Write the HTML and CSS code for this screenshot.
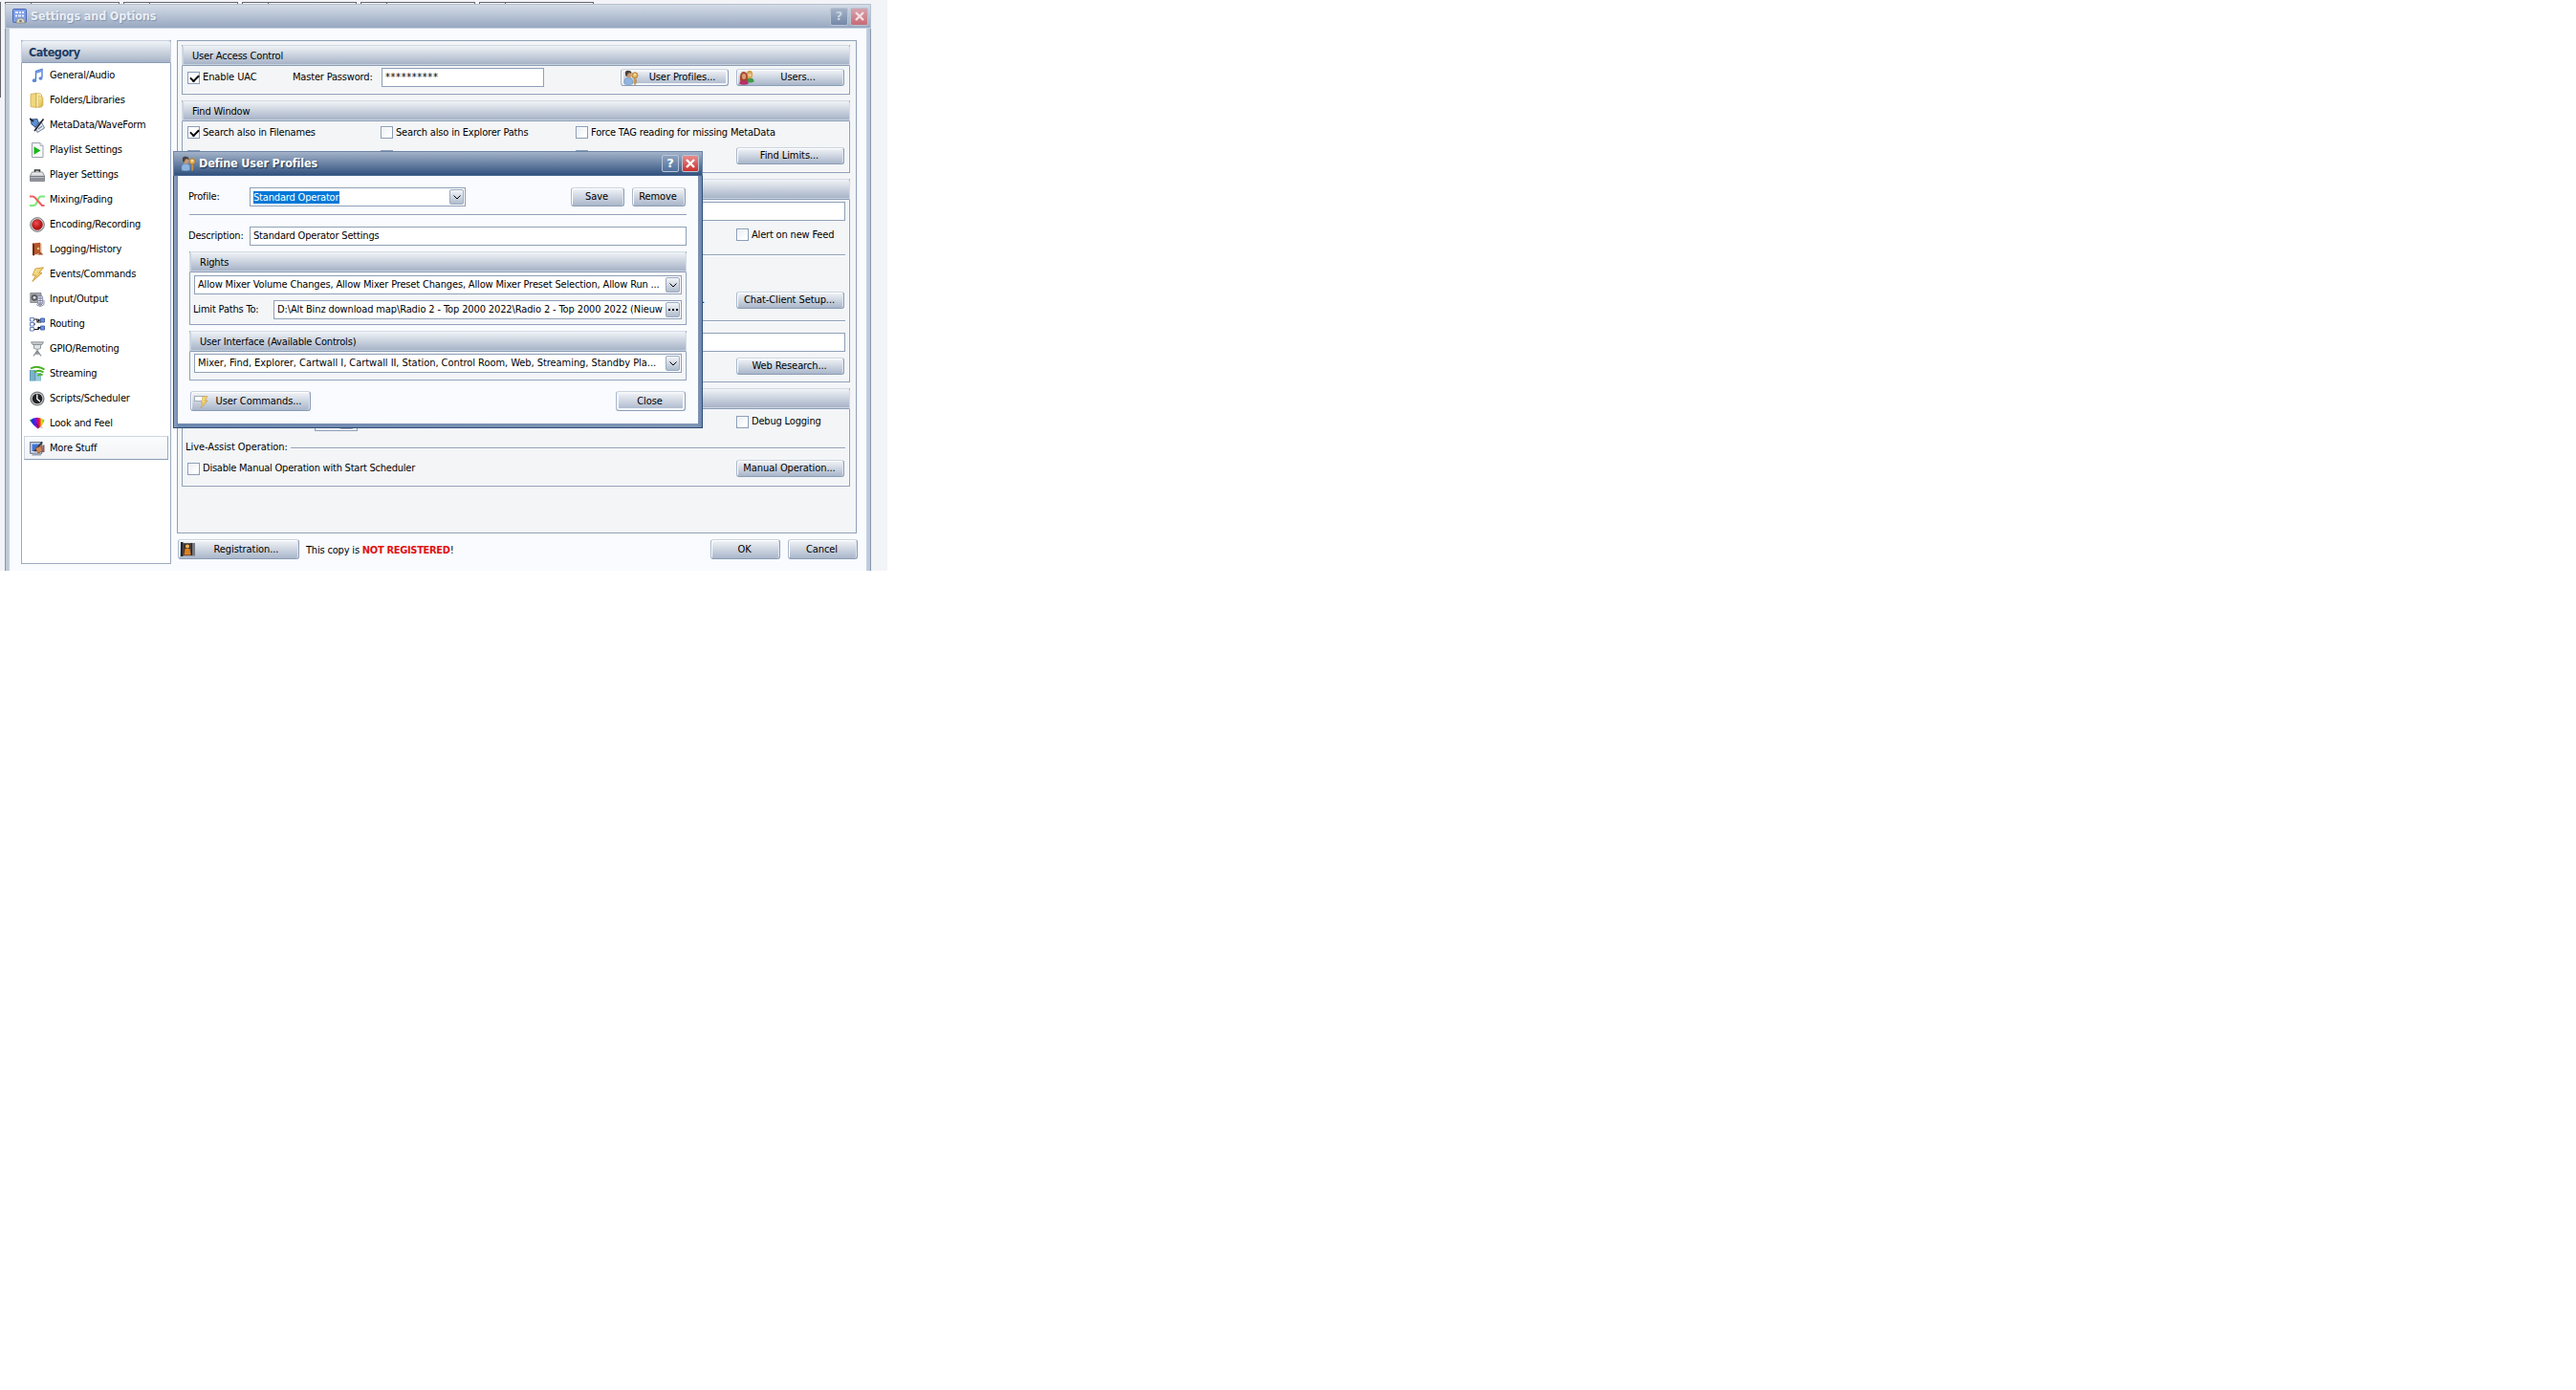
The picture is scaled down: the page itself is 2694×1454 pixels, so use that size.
FILE: index.html
```
<!DOCTYPE html>
<html lang="en">
<head>
<meta charset="utf-8">
<title>Settings and Options</title>
<link rel="stylesheet" href="styles.css">
</head>
<body>
<svg class="defs" aria-hidden="true">
  <defs>
    <linearGradient id="gold" x1="0" y1="0" x2="1" y2="1"><stop offset="0" stop-color="#fdf3b4"/><stop offset="1" stop-color="#d9a92c"/></linearGradient>
    <linearGradient id="steel" x1="0" y1="0" x2="0" y2="1"><stop offset="0" stop-color="#fafafa"/><stop offset="1" stop-color="#8c8f98"/></linearGradient>
    <linearGradient id="rainbow"><stop offset="0" stop-color="#16a016"/><stop offset=".2" stop-color="#1030e0"/><stop offset=".45" stop-color="#8a10e0"/><stop offset=".65" stop-color="#f01020"/><stop offset=".82" stop-color="#f8e010"/><stop offset="1" stop-color="#20c030"/></linearGradient>
    <radialGradient id="red" cx=".4" cy=".35"><stop offset="0" stop-color="#f05050"/><stop offset="1" stop-color="#b81414"/></radialGradient>
    <symbol id="userkey" viewBox="0 0 16 16">
      <path d="M1 15V12Q1 8.500 4.500 8.500H7Q9.500 9 9.500 12V15Q5 16.500 1 15Z" fill="#8fb5e0" stroke="#6d94c2" stroke-width=".6"/>
      <circle cx="5.500" cy="5.300" r="3" fill="#c79a72"/><path d="M2 5Q1 .5 5 .8Q8.500 .8 8.500 4Q5.500 2.600 4.500 4.200Q4.500 6.500 2.800 7Z" fill="#4c4038"/>
      <circle cx="12" cy="5.800" r="3" fill="#e6b45c" stroke="#a8762c" stroke-width=".8"/><circle cx="12" cy="5" r=".9" fill="#fff3cf"/>
      <path d="M11.300 8.500H12.900V15L12 16L11.300 15Z" fill="#d9a24a" stroke="#a8762c" stroke-width=".4"/><path d="M13 11h1M13 13h1" stroke="#a8762c"/>
    </symbol>
    <symbol id="users" viewBox="0 0 16 16">
      <path d="M7.500 13Q7.500 8.500 11 8.500Q15.600 8.500 15.600 12.500Q12 14 7.500 13Z" fill="#3e9a48"/><ellipse cx="11" cy="5" rx="3.200" ry="4.200" fill="#d3a14c"/><circle cx="11" cy="5.600" r="2" fill="#ecc58e"/>
      <path d="M.5 15Q.3 10.300 4.500 10.300Q9.800 10.300 9.600 15Q5 16.500 .5 15Z" fill="#b82f68"/><path d="M1 11.500Q0 2 5 2Q9.800 2.200 8.800 11.500Z" fill="#a3442c"/><ellipse cx="5" cy="7" rx="2.200" ry="2.900" fill="#dc9a70"/>
    </symbol>
    <symbol id="bolt" viewBox="0 0 16 16"><path d="M6 2 14.500 .8 10 6.300 13 6.500 2.800 15.500 6.500 9.300 3 9Z" fill="url(#gold)" stroke="#c98a24" stroke-width=".8"/></symbol>
  </defs>
</svg>

<div class="screen">
  <div class="tabs"><i></i><i></i><i></i><i></i><i></i></div>
  <span class="tabs-edge"></span>

  <section class="window settings">
    <header class="titlebar">
      <svg class="icon" viewBox="0 0 16 16"><rect x=".5" y=".5" width="14" height="14" rx="1" fill="#7ea0e6" stroke="#4a63b8"/><path d="M3 3h3v2H3zM7 3h2v2H7zM10 3h2v2h-2zM3 6.500h2v2H3zM6 6.500h3v2H6zM10 6.500h2v2h-2z" fill="#e8f0ff"/><path d="M4 15Q4 10 8.500 10Q13 10 13 15Z" fill="#d8d5c4" stroke="#8d8a7c" stroke-width=".8"/><circle cx="8.500" cy="13" r="1.300" fill="#777"/></svg>
      <h1>Settings and Options</h1>
      <span class="cap help">?</span>
      <span class="cap shut"><svg viewBox="0 0 10 10"><path d="M1 1 9 9M9 1 1 9"/></svg></span>
    </header>
    <div class="client">
      <nav class="category">
        <h2>Category</h2>
        <ul>
          <li><svg class="icon" viewBox="0 0 16 16"><path d="M6.500 12V3.500L13 1.500V10" fill="none" stroke="#4a73c8" stroke-width="1.300"/><path d="M6.500 3.500 13 1.500V4L6.500 6Z" fill="#6f9ae6"/><ellipse cx="5" cy="13.200" rx="2.200" ry="1.900" fill="#5b86d8"/><ellipse cx="11.500" cy="11" rx="2" ry="1.700" fill="#5b86d8"/></svg>General/Audio</li>
          <li><svg class="icon" viewBox="0 0 16 16"><path d="M1 1.500 7 .5V15.500L1 14.500Z" fill="#f1d77c" stroke="#c5a044" stroke-width=".7"/><path d="M7 .8H11L12.500 2V15H7Z" fill="#fdf0b2" stroke="#c5a044" stroke-width=".7"/><path d="M9.500 3 14 5V13.500L9.500 15.500Z" fill="url(#gold)" stroke="#c5a044" stroke-width=".5"/></svg>Folders/Libraries</li>
          <li><svg class="icon" viewBox="0 0 16 16"><path d="M5 8 12 4 15.500 11 8 15.500Z" fill="#dfe8f2" stroke="#56677c" stroke-width=".8"/><path d="M1 2 8 1.500 9.500 6 6 10 2 7Z" fill="#5b8fd0" stroke="#1f3f70" stroke-width=".8"/><path d="M0 1 4 4M5 14 14.500 1.500" stroke="#223" stroke-width="1.600"/><path d="M9 12l4-3" stroke="#56677c"/></svg>MetaData/WaveForm</li>
          <li><svg class="icon" viewBox="0 0 16 16"><path d="M2.500 .5H11L14 3.500V15.500H2.500Z" fill="#f8f9fb" stroke="#9ba1ab"/><path d="M11 .5V3.500H14" fill="#dde2e8" stroke="#9ba1ab" stroke-width=".7"/><path d="M4.500 4.300 11.500 8.500 4.500 12.700Z" fill="#17b817"/></svg>Playlist Settings</li>
          <li><svg class="icon" viewBox="0 0 16 16"><path d="M5.500 5V3H10.500V5" fill="none" stroke="#333" stroke-width="1.600"/><path d="M2.500 5H13.500L15.500 9V14.500H.5V9Z" fill="url(#steel)" stroke="#777b85" stroke-width=".8"/><path d="M.5 9.500H15.500M1 12H15" stroke="#62656e" stroke-width=".8"/></svg>Player Settings</li>
          <li><svg class="icon" viewBox="0 0 16 16"><path d="M0 14H4Q6.500 14 8 9.500Q9.500 4.500 12 4.500H16" fill="none" stroke="#7be87b" stroke-width="2.200"/><path d="M0 4.500H3Q5 4.500 8 8.500L13 14H15.500" fill="none" stroke="#ee6262" stroke-width="2.200"/></svg>Mixing/Fading</li>
          <li><svg class="icon" viewBox="0 0 16 16"><circle cx="8" cy="8" r="7.300" fill="#d7d7d9" stroke="#707074"/><circle cx="8" cy="8" r="5.500" fill="url(#red)" stroke="#8c2020" stroke-width=".5"/></svg>Encoding/Recording</li>
          <li><svg class="icon" viewBox="0 0 16 16"><path d="M3 1.500 11 .8V12L3 14Z" fill="#b8562c"/><path d="M3 1.500 5 2.500V14.500L3 14Z" fill="#6d2c14"/><path d="M11 .8 12.500 2V13L5 14.500 11 12Z" fill="#e2b08a"/><circle cx="9" cy="7" r="1.300" fill="#e8c07a"/><path d="M9 13.500 14.500 13.500 11 10.500Z" fill="#9b4a28"/></svg>Logging/History</li>
          <li><svg class="icon"><use href="#bolt"/></svg>Events/Commands</li>
          <li><svg class="icon" viewBox="0 0 16 16"><path d="M.8 1.500H12V11.500H.8Z" fill="#a6a8ac" stroke="#6c6e74" stroke-width=".7"/><circle cx="5" cy="6.300" r="3.400" fill="#5a5c62"/><circle cx="5" cy="6.300" r="1.500" fill="#d8dade"/><rect x="8.300" y="4" width="5.400" height="10" rx="2.700" fill="#e6e9f2" stroke="#6d7490" stroke-width=".8"/><path d="M8.500 7h5M8.500 9.500h5M8.500 12h5M11 4v11.500M7 13.500Q11 17 15 13.500V9" fill="none" stroke="#6d7490" stroke-width=".8"/></svg>Input/Output</li>
          <li><svg class="icon" viewBox="0 0 16 16"><path d="M4 3H8V6H12M4 8H6M4 13.500H9V11.500H12" fill="none" stroke="#111" stroke-width="1.200"/><path d="M.5 1.500H4.500V5H.5ZM.5 6.500H4.500V10H.5ZM.5 11.500H4.500V15H.5Z" fill="#f5f7fc" stroke="#5a75b0" stroke-width=".9"/><path d="M11.500 2H15.500V6H11.500ZM11.500 10H15.500V14H11.500Z" fill="#6d93e0" stroke="#3c5ca4" stroke-width=".9"/><path d="M9 2.500 11.500 4 9 5.500ZM9 10.500 11.500 12 9 13.500Z" fill="#111"/></svg>Routing</li>
          <li><svg class="icon" viewBox="0 0 16 16"><path d="M1.500 .8H14.500L13 3.500H3Z" fill="#c5c9cc" stroke="#7f8589" stroke-width=".8"/><path d="M4.500 3.500H11.500V7.500Q8 9.500 4.500 7.500Z" fill="#dfe2e4" stroke="#7f8589" stroke-width=".8"/><path d="M8 9V13M8 9.500 4 15.500M8 9.500 12 15.500M5.500 13H10.500" fill="none" stroke="#8b9195" stroke-width="1.300"/></svg>GPIO/Remoting</li>
          <li><svg class="icon" viewBox="0 0 16 16"><path d="M0 4H6V15.500H0Z" fill="#5d9ab8"/><path d="M6 7H12V15.500H6Z" fill="#86bfd2"/><path d="M2 4V15M4 4V15M8 8V15M10 8V15" stroke="#b9dbe6" stroke-width=".7"/><path d="M1 2.500Q8 -1.500 15.500 3.500M5 6.500Q9.500 3 14.500 6.500M8.500 10Q11 7.500 13.500 9.500" fill="none" stroke="#48b020" stroke-width="1.800"/></svg>Streaming</li>
          <li><svg class="icon" viewBox="0 0 16 16"><circle cx="8" cy="8" r="7.600" fill="#77797c"/><circle cx="8" cy="8" r="6.300" fill="#d0d2d4"/><circle cx="8" cy="8" r="5.300" fill="#202224"/><path d="M7.800 3.500V8.300L10.800 11" fill="none" stroke="#fff" stroke-width="1.300"/></svg>Scripts/Scheduler</li>
          <li><svg class="icon" viewBox="0 0 16 16"><path d="M0 4.500Q8 -1 15.500 4.500L12.500 11 8.500 13.500 4 9.500Z" fill="url(#rainbow)"/><path d="M9 13 13 10.500 14 13Z" fill="#cfd3d8"/><path d="M7 8 9.500 12.500" stroke="#222" stroke-width=".8"/></svg>Look and Feel</li>
          <li class="current"><svg class="icon" viewBox="0 0 16 16"><rect x=".7" y="1.700" width="12" height="11.500" fill="#dfe6f2" stroke="#52617e"/><rect x="2.500" y="3.500" width="8.500" height="7.500" fill="#3f74d4"/><path d="M2 15.500H12V13H4Z" fill="#9aa2b0"/><path d="M4 11 12.500 .8 13.800 2 6.500 11.500Z" fill="#3a3a40"/><path d="M6 8 11.500 5.500 13.500 10.500 9 13Z" fill="#d08a58" stroke="#7c4524" stroke-width=".7"/><path d="M13.500 4.500H15.500V12H13Z" fill="#8e5a60"/></svg>More Stuff</li>
        </ul>
      </nav>

      <main class="page">
        <div class="panel">
          <section class="group uac">
            <h3>User Access Control</h3>
            <div class="row">
              <label class="check on"><i></i>Enable UAC</label>
              <span class="pw-label">Master Password:</span>
              <span class="field pw">**********</span>
              <span class="btn w113 focus push"><svg class="icon"><use href="#userkey"/></svg><b>User Profiles...</b></span>
              <span class="btn w113"><svg class="icon"><use href="#users"/></svg><b>Users...</b></span>
            </div>
          </section>
          <section class="group find">
            <h3>Find Window</h3>
            <div class="thirds">
              <label class="check on"><i></i>Search also in Filenames</label>
              <label class="check"><i></i>Search also in Explorer Paths</label>
              <label class="check tag"><i></i>Force TAG reading for missing MetaData</label>
            </div>
            <div class="thirds second">
              <label class="check"><i></i></label>
              <label class="check"><i></i></label>
              <label class="check"><i></i></label>
              <span class="btn w113"><b>Find Limits...</b></span>
            </div>
          </section>
          <section class="group web">
            <h3></h3>
            <span class="field full"></span>
            <div class="row right feed"><label class="check w113"><i></i>Alert on new Feed</label></div>
            <hr>
            <div class="row right chat"><span>.</span><span class="btn w113"><b>Chat-Client Setup...</b></span></div>
            <hr>
            <span class="field full research"></span>
            <div class="row right"><span class="btn w113"><b>Web Research...</b></span></div>
          </section>
          <section class="group ops">
            <h3></h3>
            <div class="row debug"><span class="field spin"><i class="drop"></i></span><label class="check w113"><i></i>Debug Logging</label></div>
            <div class="legend"><span>Live-Assist Operation:</span><hr></div>
            <div class="row manual"><label class="check"><i></i>Disable Manual Operation with Start Scheduler</label><span class="btn w113"><b>Manual Operation...</b></span></div>
          </section>
        </div>
        <footer class="actions">
          <span class="btn reg"><svg class="icon" viewBox="0 0 16 16"><rect y="1" width="15" height="13.500" fill="#77797f"/><path d="M0 0H2.500V15H0ZM10.500 1H12V14H10.500Z" fill="#24242a"/><path d="M3 1.500H10.500V14H3Z" fill="#45342c"/><circle cx="7" cy="4.500" r="2" fill="#f6b65a"/><path d="M4.500 7H9.500L10.500 13.500H3.500Z" fill="#e0801f"/></svg><b>Registration...</b></span>
          <p>This copy is <strong>NOT REGISTERED</strong>!</p>
          <span class="btn w73"><b>OK</b></span>
          <span class="btn w73"><b>Cancel</b></span>
        </footer>
      </main>
    </div>
  </section>

  <section class="window dialog">
    <header class="titlebar">
      <svg class="icon"><use href="#userkey"/></svg>
      <h1>Define User Profiles</h1>
      <span class="cap help">?</span>
      <span class="cap shut"><svg viewBox="0 0 10 10"><path d="M1 1 9 9M9 1 1 9"/></svg></span>
    </header>
    <div class="client">
      <div class="line profile">
        <span class="lbl">Profile:</span>
        <span class="field combo"><mark>Standard Operator</mark><i class="drop"><svg viewBox="0 0 8 5"><path d="M.5 .5 4 4 7.500 .5"/></svg></i></span>
        <span class="btn w56"><b>Save</b></span>
        <span class="btn w56"><b>Remove</b></span>
      </div>
      <hr>
      <div class="line"><span class="lbl">Description:</span><span class="field grow">Standard Operator Settings</span></div>
      <section class="group rights">
        <h3>Rights</h3>
        <span class="field"><em class="allow">Allow Mixer Volume Changes, Allow Mixer Preset Changes, Allow Mixer Preset Selection, Allow Run ...</em><i class="drop"><svg viewBox="0 0 8 5"><path d="M.5 .5 4 4 7.500 .5"/></svg></i></span>
        <div class="line limit"><span class="lbl">Limit Paths To:</span><span class="field grow"><em class="path">D:\Alt Binz download map\Radio 2 - Top 2000 2022\Radio 2 - Top 2000 2022 (Nieuw</em><i class="drop"><svg class="dots" viewBox="0 0 10 2"><path d="M0 0h2v2H0zM4 0h2v2H4zM8 0h2v2H8z"/></svg></i></span></div>
      </section>
      <section class="group controls">
        <h3>User Interface (Available Controls)</h3>
        <span class="field"><em class="ui">Mixer, Find, Explorer, Cartwall I, Cartwall II, Station, Control Room, Web, Streaming, Standby Pla...</em><i class="drop"><svg viewBox="0 0 8 5"><path d="M.5 .5 4 4 7.500 .5"/></svg></i></span>
      </section>
      <div class="line foot">
        <span class="btn cmds"><svg class="icon" viewBox="0 0 16 16"><rect x=".5" y="2.500" width="11" height="5" fill="#fff" stroke="#a3acba"/><path d="M9 3 14 2.500 11.500 7H14L7 15 9 9.500H7.500Z" fill="url(#gold)" stroke="#d49a30" stroke-width=".6"/></svg><b>User Commands...</b></span>
        <span class="btn w73 focus"><b>Close</b></span>
      </div>
    </div>
  </section>
</div>
</body>
</html>
```
FILE: styles.css
```
* { box-sizing: border-box; }
body {
  margin: 0;
  background: #fff;
  color: #000;
  font: 11px/14px "DejaVu Sans Condensed", "DejaVu Sans", sans-serif;
  letter-spacing: -.18px;
}
h1, h2, h3, p, ul { margin: 0; padding: 0; list-style: none; font-size: inherit; }
i, em, b { font-style: normal; font-weight: normal; }
hr { margin: 0; height: 1px; border: 0; background: #8fa0b8; box-shadow: 0 1px 0 #fff; }
.defs { position: absolute; width: 0; height: 0; }
.icon { width: 16px; height: 16px; flex: none; display: block; }

.screen { position: relative; width: 928px; height: 597px; overflow: hidden; background: #f3f4f7; }
.tabs { display: flex; gap: 4px; padding: 2px 0 0 5px; }
.tabs i { width: 120px; height: 3px; border: 1px solid #63656a; border-bottom: 0; background: linear-gradient(#63656a, #63656a) 26px 0 / 1px 3px no-repeat; }
.tabs-edge { position: absolute; left: 0; top: 2px; width: 1px; height: 100px; background: #63656a; }

/* windows */
.window { position: absolute; display: flex; flex-direction: column; }
.titlebar { display: flex; align-items: center; flex: none; }
.titlebar h1 { flex: 1; font: bold 12.5px/18px "DejaVu Sans Condensed", "DejaVu Sans", sans-serif; letter-spacing: -.13px; margin-left: 3px; }
.cap { display: flex; align-items: center; justify-content: center; border-radius: 2px; font: bold 13px/16px "DejaVu Sans", sans-serif; letter-spacing: 0; }
.cap svg { width: 10px; height: 10px; fill: none; stroke: currentColor; stroke-width: 2.4; }

.settings { left: 5px; top: 4px; width: 906px; height: 620px; padding: 0 5px; background: linear-gradient(90deg, #8697b1 1px, #b9c5d6 1px, #c6d0dd 5px, #c6d0dd 901px, #b9c5d6 905px, #8697b1 905px); }
.settings .titlebar { height: 26px; margin: 0 -5px; padding: 0 2px 0 7px; border: 1px solid #b6c1d0; border-bottom-color: #c9d4e2; background: linear-gradient(#d3dbe6, #98a8c1); color: #e9eef5; }
.settings .titlebar h1 { margin-left: 4px; text-shadow: 1px 1px 1px #8091ab; }
.settings .titlebar .icon { margin-right: -1px; }
.settings .cap { width: 19px; height: 19px; margin-left: 2px; border: 1px solid #b8c4d4; }
.settings .help { background: linear-gradient(#a5b2c6, #7388a8); color: #cbd5e2; }
.settings .shut { background: linear-gradient(#d5a3ad, #c86b76); color: #f3dfe3; }
.settings > .client { display: flex; flex: 1; gap: 6px; padding: 12px 9px 0 12px; background: #f9fbfe; }

.category { width: 157px; height: 548px; border: 1px solid #9cabc0; background: #fff; }
.category h2 { height: 24px; margin: -1px -1px 0; padding-left: 7px; border: 1px solid #c9d1dc; border-bottom: 1px solid #8b9db6; border-radius: 3px 3px 0 0; background: linear-gradient(#f1f4f8, #a7b4c7); font: bold 12.5px/24px "DejaVu Sans Condensed", "DejaVu Sans", sans-serif; letter-spacing: -.5px; color: #1f3d63; }
.category ul { padding: 0 2px; }
.category li { display: flex; align-items: center; gap: 5px; height: 25px; margin-bottom: 1px; padding-left: 5px; border: 1px solid transparent; }
.category .current { border-color: #ccd5e0 #9aabc2 #8b9db6 #ccd5e0; background: linear-gradient(#fbfcfd, #f1f3f6); }

.page { flex: 1; }
.panel { width: 711px; height: 516px; padding: 4px 6px 0 4px; border: 1px solid #8fa0b8; background: #f3f5f7; display: flex; flex-direction: column; gap: 6px; }

/* titled groups */
.group { display: flex; flex-direction: column; border: 1px solid #8fa0b8; border-top: 0; box-shadow: inset 0 -1px 0 #fff, inset -1px 0 0 #fff; }
.group h3 { flex: none; height: 22px; margin: 0 -1px; padding-left: 10px; border: 1px solid #d3dae4; border-bottom: 1px solid #8b9db6; border-radius: 3px 3px 0 0; background: linear-gradient(#f0f3f7, #a3b0c5); box-shadow: inset 1px -1px 0 #c9d2de; font-weight: normal; line-height: 21px; }
.uac { height: 52px; }
.find { height: 76px; }
.web { height: 213px; }
.ops { height: 103px; }

.row { display: flex; align-items: center; margin: 0 5px; }
.right { justify-content: flex-end; }
.check { display: flex; align-items: center; gap: 3px; white-space: nowrap; }
.check i { flex: none; position: relative; width: 13px; height: 13px; border: 1px solid #8b9db6; background: linear-gradient(135deg, #e9edf2, #fff 80%); box-shadow: inset 0 0 0 1px #fff; }
.check.on i { background: #fff; }
.check.on i::after { content: ""; position: absolute; left: 2px; top: 2px; width: 7px; height: 4px; border: solid #000; border-width: 0 0 2px 2px; transform: rotate(-45deg); }
.w113 { width: 113px; flex: none; }
.w73 { width: 73px; }
.w56 { width: 56px; }

.uac .row { padding-top: 2px; }
.pw-label { width: 93px; margin-left: 42px; }
.uac .check { width: 68px; letter-spacing: -.1px; }
.pw { width: 170px; padding-left: 4px; letter-spacing: .6px; }
.push { margin-left: 80px; margin-right: 8px; }
.thirds { display: grid; grid-template-columns: 202px 204px 168px 113px; align-items: center; height: 23px; margin: 0 5px; }
.thirds.second { height: 18px; margin-top: 4px; }
.tag { letter-spacing: -.17px; }

.field { display: flex; align-items: center; height: 20px; padding-left: 3px; border: 1px solid #8fa0b8; background: #fff; white-space: nowrap; }
.full { margin: 2px 4px 0 5px; flex: none; }
.feed { height: 14px; margin-top: 7px; padding-top: 1px; }
.web hr, .ops hr { margin: 14px 4px 0 5px; flex: none; }
.chat { margin-top: 38px; }
.chat span:first-child { width: 36px; }
.web .chat + hr { margin-top: 12px; }
.research { margin: 12px 4px 6px 5px; }
.row.right { margin-right: 5px; }
.debug { margin-top: 3px; justify-content: space-between; padding-left: 133px; }
.spin { width: 45px; justify-content: flex-end; padding-right: 2px; }
.legend { display: flex; align-items: center; gap: 3px; height: 14px; margin: 10px 4px 0 3px; letter-spacing: -.06px; }
.legend hr { flex: 1; margin: 0; }
.manual { justify-content: space-between; margin-top: 6px; }
.manual .check { letter-spacing: -.23px; }

/* buttons */
.btn { position: relative; display: flex; align-items: center; height: 18px; border: 1px solid #8c9db6; border-top-color: #cbd4df; border-left-color: #a9b7ca; border-radius: 3px; background: linear-gradient(#f3f5f8, #a9b6ca); box-shadow: inset 1px 1px 0 #fff, inset -1px 0 0 #dfe5ed; white-space: nowrap; letter-spacing: -.08px; }
.btn b { flex: 1; padding-right: 2px; text-align: center; }
.btn .icon { margin-left: 2px; }
.focus { box-shadow: inset 0 0 0 2px #f4f6fa; }

.actions { display: flex; align-items: center; margin-top: 6px; width: 712px; padding-left: 1px; }
.actions .btn { height: 21px; }
.actions p { flex: 1; padding: 2px 0 0 7px; }
.actions strong { color: #e01010; letter-spacing: -.32px; }
.reg { width: 127px; }
.actions .w73 { margin-left: 8px; }

/* dialog */
.dialog { left: 181px; top: 158px; width: 554px; height: 290px; padding: 0 4px 4px; border: 1px solid #2f4d78; background: linear-gradient(90deg, #92a6c2, #6e88ae 4px, #8196b6 547px, #6e88ae); }
.dialog .titlebar { height: 26px; margin: -1px -5px 0; padding: 0 3px 0 7px; border: 1px solid #6c84a6; border-bottom-color: #48658f; background: linear-gradient(#a3b3c9, #32527f); color: #fff; }
.dialog .titlebar h1 { text-shadow: 1px 1px 1px #1c3355; }
.dialog .cap { width: 18px; height: 18px; margin-left: 3px; border: 1px solid #b7c5d8; }
.dialog .help { background: linear-gradient(#8ea2bf, #50709c); }
.dialog .shut { background: linear-gradient(#e88d8d, #cc2f2f); }
.dialog > .client { display: flex; flex-direction: column; flex: 1; padding: 12px 12px 0; background: #f9fbfe; }
.line { display: flex; align-items: center; }
.lbl { width: 64px; margin-left: -1px; white-space: nowrap; }
.combo { width: 226px; margin-right: auto; justify-content: space-between; }
.combo mark { background: #0078d7; color: #fff; line-height: 13px; padding-right: 1px; }
.profile .btn { height: 20px; margin-right: 1px; }
.profile .btn + .btn { margin-left: 7px; }
.dialog .client > hr { margin: 8px 0 12px; flex: none; }
.grow { flex: 1; min-width: 0; }
.drop { flex: none; display: flex; align-items: center; justify-content: center; width: 15px; height: 16px; margin: 0 1px 0 auto; border: 1px solid #9aaac0; border-radius: 2px; background: linear-gradient(#f3f5f8, #b0bccd); }
.drop svg { width: 8px; height: 5px; fill: none; stroke: #000; }
.drop .dots { flex: none; width: 10px; height: 2px; fill: #000; stroke: none; }
.rights { height: 77px; margin-top: 6px; }
.controls { height: 52px; margin-top: 6px; }
.dialog .group { background: #f3f5f7; }
.dialog .group > .field { flex: none; margin: 3px 4px 0; }
.dialog .controls > .field { margin-top: 2px; }
.allow { letter-spacing: -.16px; }
.path { letter-spacing: -.125px; }
.ui { letter-spacing: -.05px; }
.limit { margin: 6px 4px 0; }
.limit .lbl { width: 84px; }
.foot { justify-content: space-between; margin: 11px 1px 0; }
.foot .btn { height: 21px; }
.cmds { width: 126px; }
.cmds .icon { margin-left: 3px; }
```
